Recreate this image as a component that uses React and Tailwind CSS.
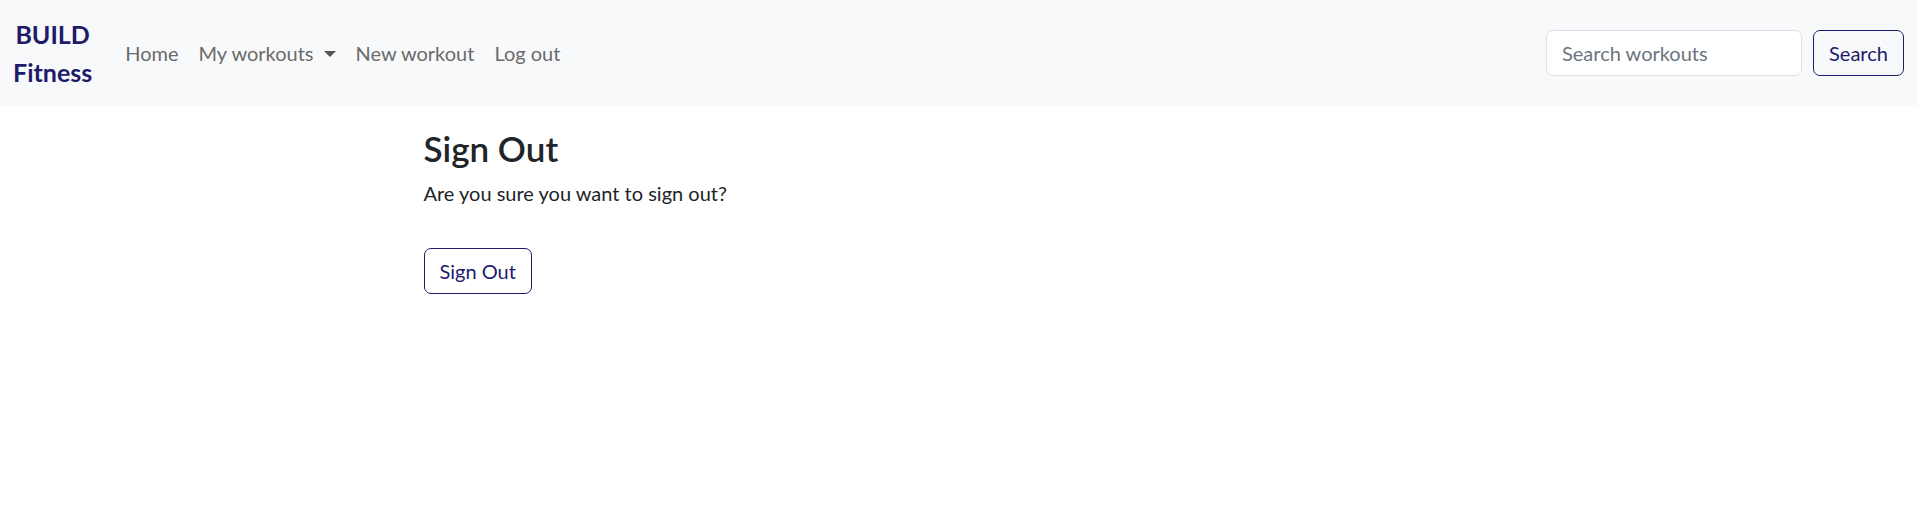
import React from "react";

const font = { fontFamily: 'Lato, "Noto Sans", sans-serif' };

function Navbar() {
  return (
    <nav className="h-[106px] bg-[#f8f9fa] flex items-center px-[13px]">
      <a href="#" className="text-center text-[25px] leading-[38px] font-bold text-[#1e1b6b] mr-[23px]">
        BUILD
        <br />
        Fitness
      </a>
      <ul className="flex items-center text-[20px] text-[#6b6b6b]">
        <li className="px-[10px]">Home</li>
        <li className="px-[10px] flex items-center">
          My workouts
          <span className="ml-[10px] mt-[2px] w-0 h-0 border-l-[6px] border-r-[6px] border-t-[6px] border-l-transparent border-r-transparent border-t-[#555]" />
        </li>
        <li className="px-[10px]">New workout</li>
        <li className="px-[10px]">Log out</li>
      </ul>
      <form className="ml-auto flex items-center gap-[11px]">
        <input
          placeholder="Search workouts"
          className="w-[256px] h-[46px] bg-white border border-[#dee2e6] rounded-[7px] px-[15px] text-[20px] placeholder:text-[#6c757d] outline-none"
        />
        <button
          type="button"
          className="w-[91px] h-[46px] border border-[#1e1b6b] rounded-[7px] text-[20px] text-[#1e1b6b]"
        >
          Search
        </button>
      </form>
    </nav>
  );
}

export default function App() {
  return (
    <div style={font} className="min-h-[517px] bg-white text-[#212529]">
      <Navbar />
      <main className="mx-auto w-[1650px]">
        <div className="ml-[275px] px-[15px] pt-[21px]">
          <h3 className="text-[35px] font-semibold leading-[42px] mb-[9px]">Sign Out</h3>
          <p className="text-[20px] leading-[30px] mb-[40px]">Are you sure you want to sign out?</p>
          <button className="h-[46px] px-[15px] border border-[#1e1b6b] rounded-[7px] text-[20px] text-[#1e1b6b]">
            Sign Out
          </button>
        </div>
      </main>
    </div>
  );
}
